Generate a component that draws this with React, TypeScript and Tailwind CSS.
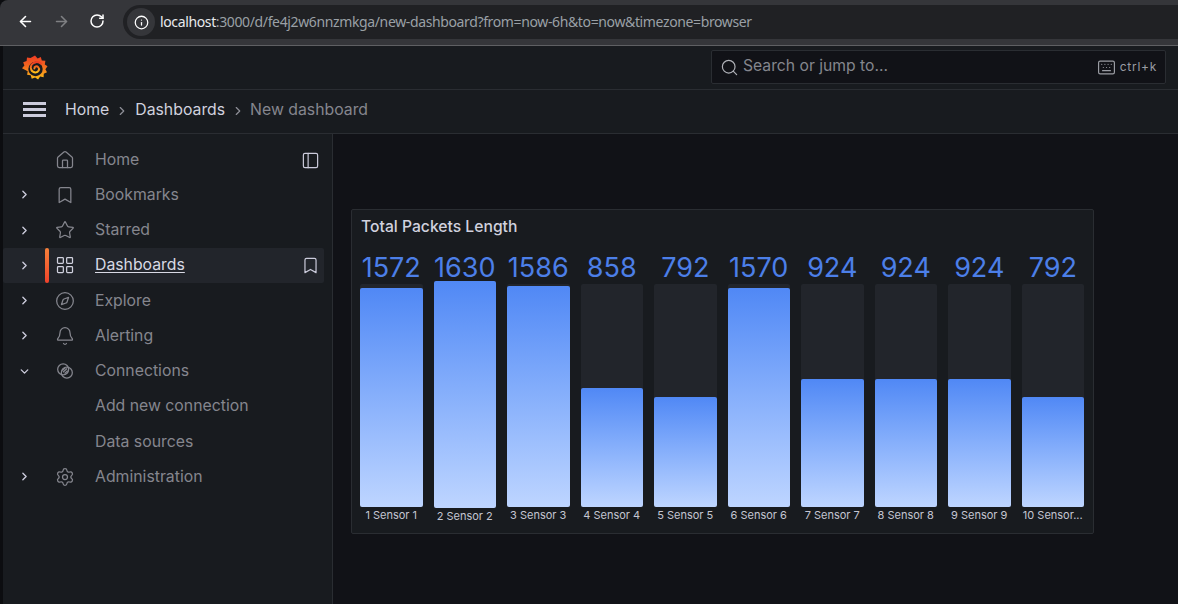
import React from 'react';
import {
  ArrowLeft, ArrowRight, RotateCw, Info, Search, Keyboard, House, Bookmark, Star,
  LayoutGrid, Compass, Bell, Settings, PanelLeft, ChevronRight, ChevronDown,
} from 'lucide-react';

const GrafanaLogo = () => (
  <svg width="26" height="28" viewBox="0 0 26 28">
    <defs>
      <linearGradient id="gf" x1="0" y1="1" x2="0" y2="0">
        <stop offset="0" stopColor="#fcc018" />
        <stop offset="0.55" stopColor="#f26a1f" />
        <stop offset="1" stopColor="#ee3a24" />
      </linearGradient>
    </defs>
    <path
      fill="url(#gf)"
      d="M13 1.5l2.6 3 3.2-1.6 1 3.6 3.6.3-.6 3.6 2.7 1.9-2.1 2.9 1.6 3-3.2 1.5-.2 3.5-3.5-.6-2 2.8-3-1.9-3.4 1.2-1-3.4-3.6-.6.6-3.5L0 14.2l2.4-2.7-1.2-3.3 3.4-1.1.4-3.5 3.5.5z"
    />
    <circle cx="13.5" cy="15" r="7.2" fill="#181b1f" />
    <path
      d="M19.5 10c-3-2.8-8-2.4-10 .8-2 3.2 0 7.6 4 7.6 3 0 4.6-3.4 2.7-5.3-1.5-1.5-3.9-.6-3.8 1.3"
      fill="none"
      stroke="url(#gf)"
      strokeWidth="2"
      strokeLinecap="round"
    />
  </svg>
);

const ConnectionsIcon = ({ className }: { className?: string }) => (
  <svg className={className} viewBox="0 0 24 24" fill="none" stroke="currentColor" strokeWidth="1.5">
    <circle cx="9.8" cy="10" r="6.6" />
    <circle cx="14.2" cy="14" r="6.6" />
    <path d="M9.5 13.5l5-4.5M11.5 15l3.8-3.4M8.6 11.4l3.8-3.4" />
  </svg>
);

const navItems = [
  { label: 'Home', icon: House },
  { label: 'Bookmarks', icon: Bookmark, arrow: 'right' },
  { label: 'Starred', icon: Star, arrow: 'right' },
  { label: 'Dashboards', icon: LayoutGrid, arrow: 'right', active: true },
  { label: 'Explore', icon: Compass, arrow: 'right' },
  { label: 'Alerting', icon: Bell, arrow: 'right' },
  { label: 'Connections', icon: ConnectionsIcon, arrow: 'down' },
  { label: 'Add new connection' },
  { label: 'Data sources' },
  { label: 'Administration', icon: Settings, arrow: 'right' },
];

const sensors = [
  { value: 1572, fill: 219, label: '1 Sensor 1' },
  { value: 1630, fill: 227, label: '2 Sensor 2', hover: true },
  { value: 1586, fill: 221, label: '3 Sensor 3' },
  { value: 858, fill: 119, label: '4 Sensor 4' },
  { value: 792, fill: 110, label: '5 Sensor 5' },
  { value: 1570, fill: 219, label: '6 Sensor 6' },
  { value: 924, fill: 128, label: '7 Sensor 7' },
  { value: 924, fill: 128, label: '8 Sensor 8' },
  { value: 924, fill: 128, label: '9 Sensor 9' },
  { value: 792, fill: 110, label: '10 Sensor...' },
];

function BrowserBar() {
  return (
    <div className="h-[46px] shrink-0 bg-[#35363a] border-b border-[#5f6063] pt-[5px] pl-[3px] rounded-tl-lg flex">
      <div className="flex items-start pt-[8px] text-white">
        <ArrowLeft className="w-[17px] h-[17px] ml-[14px]" strokeWidth={2.25} />
        <ArrowRight className="w-[17px] h-[17px] ml-[19px] text-[#7f8083]" strokeWidth={2.25} />
        <RotateCw className="w-[16px] h-[16px] ml-[19px]" strokeWidth={2.25} />
      </div>
      <div className="ml-[18px] h-[34px] flex-1 bg-[#202124] rounded-l-full flex items-center pl-[1px]">
        <div className="w-7 h-7 ml-[3px] rounded-full bg-[#35363a] flex items-center justify-center">
          <Info className="w-[15px] h-[15px] text-white" />
        </div>
        <span className="ml-[5px] mb-[1px] font-['Noto_Sans',sans-serif] text-[14px] tracking-[-0.37px] text-[#e8eaed]">
          localhost<span className="text-[#9aa0a6]">:3000/d/fe4j2w6nnzmkga/new-dashboard?from=now-6h&amp;to=now&amp;timezone=browser</span>
        </span>
      </div>
    </div>
  );
}

function TopBar() {
  return (
    <div className="h-[44px] shrink-0 border-b border-[#2a2d32] flex items-center justify-between pl-[19px] pr-[12px]">
      <GrafanaLogo />
      <div className="w-[455px] h-[34px] mb-px bg-[#111217] border border-[#2a2d32] rounded-[2px] flex items-center pl-[8px] pr-[8px] text-[#9a9ca3]">
        <Search className="w-[19px] h-[19px] text-[#b0b2b8]" strokeWidth={1.5} />
        <span className="ml-[4px] mb-[2px] text-[15.7px] text-[#84868d]">Search or jump to...</span>
        <Keyboard className="ml-auto w-[19px] h-[19px]" strokeWidth={1.5} />
        <span className="ml-[4px] text-[12px] tracking-[0.06em]">ctrl+k</span>
      </div>
    </div>
  );
}

function Breadcrumbs() {
  return (
    <div className="h-[44px] shrink-0 border-b border-[#2a2d32] flex items-center pl-[20px] pb-[3px] text-[15.8px]">
      <div className="flex flex-col gap-[3.5px] w-[23px] mb-px">
        <span className="h-[2.5px] bg-[#ccccdc]" />
        <span className="h-[2.5px] bg-[#ccccdc]" />
        <span className="h-[2.5px] bg-[#ccccdc]" />
      </div>
      <span className="ml-[19px] text-[#d0d1de]">Home</span>
      <ChevronRight className="w-[14px] h-[14px] mx-[6px] mt-[2px] text-[#8e8f98]" />
      <span className="text-[#d0d1de]">Dashboards</span>
      <ChevronRight className="w-[14px] h-[14px] mx-[5.5px] mt-[2px] text-[#8e8f98]" />
      <span className="text-[#85868e]">New dashboard</span>
    </div>
  );
}

function Sidebar() {
  return (
    <aside className="w-[330px] shrink-0 border-r border-[#2a2d32] pt-[8px] pr-[8px] relative">
      <PanelLeft className="absolute right-[12px] top-[17px] w-[19px] h-[19px] text-[#ccccdc]" strokeWidth={1.5} />
      {navItems.map((item) => {
        const Icon = item.icon;
        return (
          <div
            key={item.label}
            className={`h-[35.25px] flex items-center rounded-[2px] ${item.active ? 'bg-[#22252b]' : ''}`}
          >
            <div className="w-[42px] pl-[15px] shrink-0 text-[#ccccdc]">
              {item.arrow === 'right' && <ChevronRight className="w-[13px] h-[13px]" strokeWidth={2.5} />}
              {item.arrow === 'down' && <ChevronDown className="w-[13px] h-[13px]" strokeWidth={2.5} />}
            </div>
            <div className={`w-[4px] self-stretch rounded-[2px] shrink-0 ${item.active ? 'bg-gradient-to-b from-[#f6803a] to-[#f0402a]' : ''}`} />
            <div className="w-[46px] pl-[5.5px] shrink-0">
              {Icon && (
                <Icon
                  className={`w-[20px] h-[20px] ${item.active ? 'text-[#d0d1de]' : 'text-[#85868e]'}`}
                  strokeWidth={1.5}
                />
              )}
            </div>
            <span className={`mb-[0.5px] text-[15.8px] ${item.active ? 'text-[#d8d9e4] underline underline-offset-2' : 'text-[#85868e]'}`}>
              {item.label}
            </span>
            {item.active && <Bookmark className="ml-auto mr-[4px] w-[19px] h-[19px] text-[#ccccdc]" strokeWidth={1.5} />}
          </div>
        );
      })}
    </aside>
  );
}

function Panel() {
  return (
    <div className="w-[743px] h-[325px] bg-[#181b1f] border border-[#2a2d32] rounded-[2px] pl-[8px] pr-[9px] flex flex-col">
      <h2 className="ml-[1px] mt-[7px] text-[15.7px] font-medium text-[#d0d1de] leading-5">Total Packets Length</h2>
      <div className="mt-[10px] grid grid-cols-10 gap-[11px]">
        {sensors.map((s) => (
          <div key={s.label} className="flex flex-col items-center">
            <div className="h-[37px] text-[27px] leading-[42px] text-[#4c7fe8] whitespace-nowrap">{s.value}</div>
            <div className="w-full h-[223px] bg-[#22252b] rounded-[2px] flex flex-col justify-end">
              <div
                className={`w-full shrink-0 rounded-[2px] bg-gradient-to-b from-[#5088f5] to-[#bed5ff] ${s.hover ? '-mb-px' : ''}`}
                style={{ height: s.fill }}
              />
            </div>
            <div className={`text-[11px] leading-[14px] text-[#c4c6d2] whitespace-nowrap ${s.hover ? 'mt-[2px]' : 'mt-px'}`}>
              {s.label}
            </div>
          </div>
        ))}
      </div>
    </div>
  );
}

export default function App() {
  return (
    <div className="w-[1178px] h-[604px] overflow-hidden bg-[#0c0d10] font-['Inter',sans-serif]">
      <BrowserBar />
      <div className="h-[558px] ml-[3px] bg-[#181b1f] flex flex-col">
        <TopBar />
        <Breadcrumbs />
        <div className="flex-1 flex min-h-0">
          <Sidebar />
          <main className="flex-1 bg-[#111217] pl-[18px] pt-[75px]">
            <Panel />
          </main>
        </div>
      </div>
    </div>
  );
}
